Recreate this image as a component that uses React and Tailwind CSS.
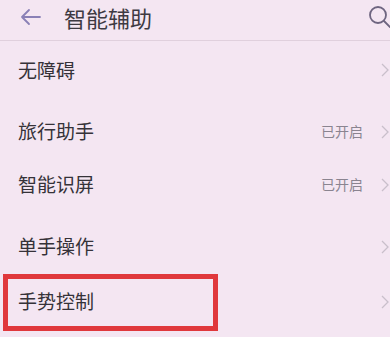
import React from 'react';

const Chevron = () => (
  <svg width="8" height="14" viewBox="0 0 8 14" className="shrink-0">
    <path d="M1 1l6 6-6 6" fill="none" stroke="#c9bfcb" strokeWidth="1.3" />
  </svg>
);

const Row = ({ label, value, className = '', boxed = false }) => (
  <div className={`relative flex items-center pl-[18px] pr-[1px] ${className}`}>
    <span className="text-[19px] text-[#353238]">{label}</span>
    <div className="ml-auto flex items-center gap-[18px]">
      {value && <span className="text-[14px] text-[#8a8490]">{value}</span>}
      <Chevron />
    </div>
    {boxed && (
      <div className="absolute left-[3px] top-0 w-[215px] h-[57px] border-[5px] border-[#e0383c]" />
    )}
  </div>
);

export default function App() {
  return (
    <div
      className="w-[390px] h-[337px] overflow-hidden bg-[#f4e6f2]"
      style={{ fontFamily: '"Noto Sans CJK SC", "Noto Sans", sans-serif' }}
    >
      <div className="h-[41px] border-b border-[#e0d0dd] flex items-start pt-[3px] pl-[18px] relative">
        <svg width="26" height="26" viewBox="0 0 26 26" className="mt-[1px]">
          <path d="M22 13H4M11 6l-7 7 7 7" fill="none" stroke="#8a80b6" strokeWidth="1.8" strokeLinecap="round" strokeLinejoin="round" />
        </svg>
        <span className="ml-[20px] text-[22px] leading-[28px] text-[#3e3a42]">智能辅助</span>
        <svg width="26" height="26" viewBox="0 0 26 26" className="absolute left-[367px] top-[4px]">
          <circle cx="11" cy="11" r="8" fill="none" stroke="#6e6580" strokeWidth="1.8" />
          <path d="M17 17l6 6" stroke="#6e6580" strokeWidth="1.8" strokeLinecap="round" />
        </svg>
      </div>
      <Row label="无障碍" className="h-[58px]" />
      <Row label="旅行助手" value="已开启" className="h-[53px] mt-[6px]" />
      <Row label="智能识屏" value="已开启" className="h-[53px]" />
      <Row label="单手操作" className="h-[55px] mt-[8px]" />
      <Row label="手势控制" className="h-[55px]" boxed />
    </div>
  );
}
